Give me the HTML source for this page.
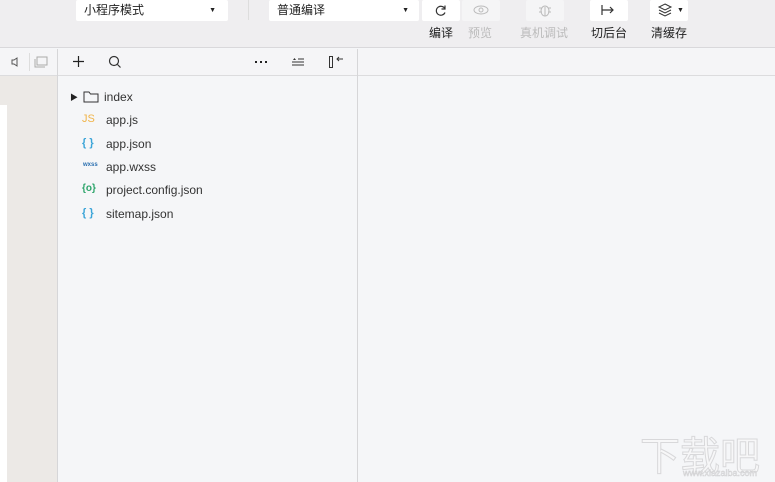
<!DOCTYPE html>
<html><head><meta charset="utf-8"><style>
*{margin:0;padding:0;box-sizing:border-box}
body{width:775px;height:482px;overflow:hidden;background:#f5f6f8;font-family:"Liberation Sans","Noto Sans CJK SC",sans-serif;position:relative;font-size:12px;color:#222}
.a{position:absolute}
.top{left:0;top:0;width:775px;height:48px;background:#efeef0;border-bottom:1px solid #d9d8db}
.sel{background:#fff;border-radius:2px;height:21px;top:0;font-size:12px;line-height:21px;padding-left:8px}
.btn{background:#fff;width:38px;height:21px;top:0;border-radius:2px}
.lbl{top:24px;font-size:12px;text-align:center;width:50px}
.tab{left:0;top:49px;width:775px;height:27px;background:#f5f5f7;border-bottom:1px solid #dcdcde}
.f{left:106px;font-size:12px;color:#333}
.ic{left:82px;font-size:9px;font-weight:bold}
</style></head><body>
<div class="a top"></div>
<div class="a sel" style="left:76px;width:152px">小程序模式<span class="a" style="right:12px;font-size:7px">▼</span></div>
<div class="a" style="left:248px;top:0;width:1px;height:20px;background:#ddd"></div>
<div class="a sel" style="left:269px;width:150px">普通编译<span class="a" style="right:10px;font-size:7px">▼</span></div>
<div class="a btn" style="left:422px"><svg class="a" style="left:12px;top:4px" width="14" height="13" viewBox="0 0 14 13"><path d="M11 5A4.5 4.5 0 1 0 11 8.5M11 1.5V5H7.5" fill="none" stroke="#333" stroke-width="1.2"/></svg></div>
<div class="a btn" style="left:462px;background:#f5f5f6"><svg class="a" style="left:11px;top:5px" width="16" height="10"><ellipse cx="8" cy="5" rx="7" ry="4" fill="none" stroke="#bbb"/><circle cx="8" cy="5" r="2" fill="none" stroke="#bbb"/></svg></div>
<div class="a btn" style="left:526px;background:#f5f5f6"><svg class="a" style="left:11px;top:2px" width="16" height="16"><ellipse cx="8" cy="9" rx="4" ry="5" fill="none" stroke="#bbb"/><path d="M2 6h3M11 6h3M2 10h3M11 10h3M8 5v9" stroke="#bbb"/></svg></div>
<div class="a btn" style="left:590px"><svg class="a" style="left:11px;top:4px" width="16" height="12"><path d="M1 1v10M1 6h11M9 3l3 3-3 3" fill="none" stroke="#333" stroke-width="1.2"/></svg></div>
<div class="a btn" style="left:650px"><svg class="a" style="left:7px;top:3px" width="16" height="14"><path d="M8 1l6 3-6 3-6-3zM2 7l6 3 6-3M2 10l6 3 6-3" fill="none" stroke="#333"/></svg><span class="a" style="left:27px;top:0;font-size:7px;line-height:21px">▼</span></div>
<div class="a lbl" style="left:416px">编译</div>
<div class="a lbl" style="left:455px;color:#bbb">预览</div>
<div class="a lbl" style="left:514px;width:60px;color:#bbb">真机调试</div>
<div class="a lbl" style="left:584px">切后台</div>
<div class="a lbl" style="left:644px">清缓存</div>
<div class="a tab"></div>
<div class="a" style="left:0;top:76px;width:57px;height:406px;background:#ece9e6"></div>
<div class="a" style="left:0;top:105px;width:7px;height:377px;background:#fff"></div>
<div class="a" style="left:57px;top:49px;width:1px;height:433px;background:#d6d6d8"></div>
<div class="a" style="left:357px;top:49px;width:1px;height:433px;background:#d6d6d8"></div>
<div class="a" style="left:29px;top:53px;width:1px;height:18px;background:#ddd"></div>
<svg class="a" style="left:11px;top:57px" width="8" height="10"><path d="M1 3h2l3-2v8l-3-2H1z" fill="none" stroke="#555"/></svg>
<svg class="a" style="left:34px;top:56px" width="14" height="12"><rect x="3" y="1" width="10" height="8" fill="none" stroke="#aaa"/><path d="M1 3v8h10" fill="none" stroke="#aaa"/></svg>
<svg class="a" style="left:72px;top:55px" width="13" height="13"><path d="M6.5 1v11M1 6.5h11" stroke="#222" stroke-width="1.2"/></svg>
<svg class="a" style="left:108px;top:55px" width="14" height="14"><circle cx="6" cy="6" r="4.5" fill="none" stroke="#333" stroke-width="1.2"/><path d="M9.5 9.5l3 3" stroke="#333" stroke-width="1.2"/></svg>
<svg class="a" style="left:254px;top:60px" width="14" height="4"><rect x="1" y="1" width="2" height="2" fill="#222"/><rect x="6" y="1" width="2" height="2" fill="#222"/><rect x="11" y="1" width="2" height="2" fill="#222"/></svg>
<svg class="a" style="left:291px;top:57px" width="14" height="10"><path d="M2 3l1.5-2 1.5 2z" fill="#333"/><path d="M7 2h6M1 5h12M1 8h12" stroke="#333"/></svg>
<svg class="a" style="left:328px;top:55px" width="16" height="14"><rect x="1.5" y="1.5" width="3" height="11" fill="none" stroke="#333"/><path d="M9 4h6M11 2l-2 2 2 2" fill="none" stroke="#333"/></svg>
<div class="a" style="left:70px;top:92px;font-size:8px">▶</div>
<svg class="a" style="left:83px;top:90px" width="16" height="13"><path d="M1 2h5l1.5 2H15v8H1z" fill="none" stroke="#333"/></svg>
<div class="a f" style="left:104px;top:90px">index</div>
<div class="a ic" style="top:113px;color:#f0b44a;font-size:11px;font-weight:normal">JS</div><div class="a f" style="top:113px">app.js</div>
<div class="a ic" style="top:137px;color:#3aa4d8;font-size:11px">{ }</div><div class="a f" style="top:137px">app.json</div>
<div class="a ic" style="top:162px;color:#2a6fb0;font-size:6px;left:83px">wxss</div><div class="a f" style="top:160px">app.wxss</div>
<div class="a ic" style="top:183px;color:#2ca46a;font-size:10px">{o}</div><div class="a f" style="top:183px">project.config.json</div>
<div class="a ic" style="top:207px;color:#3aa4d8;font-size:11px">{ }</div><div class="a f" style="top:207px">sitemap.json</div>
<div class="a" style="left:640px;top:424px;font-size:40px;color:#f7f7f8;-webkit-text-stroke:1px #d8d8da">下载吧</div>
<div class="a" style="left:683px;top:468px;font-size:9px;color:#f7f7f8;-webkit-text-stroke:0.5px #d0d0d2">www.xiazaiba.com</div>
</body></html>
